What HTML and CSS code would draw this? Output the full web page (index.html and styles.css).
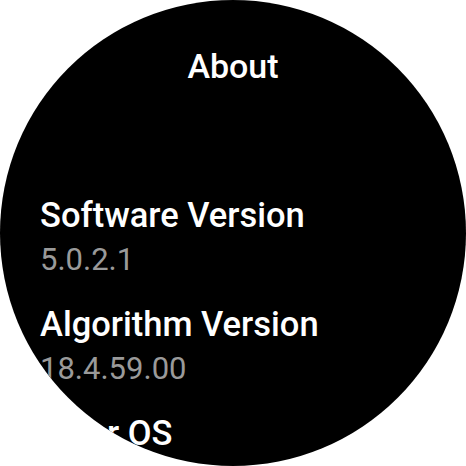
FILE: index.html
```html
<!DOCTYPE html>
<html>
<head>
<meta charset="utf-8">
<link rel="stylesheet" href="styles.css">
</head>
<body>
<div class="watch">
  <div class="header">About</div>
  <div class="list">
    <div class="item">
      <div class="title">Software Version</div>
      <div class="value">5.0.2.1</div>
    </div>
    <div class="item">
      <div class="title">Algorithm Version</div>
      <div class="value">18.4.59.00</div>
    </div>
    <div class="item">
      <div class="title">Wear OS</div>
      <div class="value">H MR2</div>
    </div>
  </div>
</div>
</body>
</html>
```
FILE: styles.css
```css
html, body {
  margin: 0;
  padding: 0;
  background: #ffffff;
}
.watch {
  width: 466px;
  height: 466px;
  border-radius: 50%;
  overflow: hidden;
  background: #000000;
  font-family: Roboto, "Noto Sans", sans-serif;
  display: flex;
  flex-direction: column;
  padding-top: 44px;
  box-sizing: border-box;
}
.header {
  color: #ffffff;
  font-size: 34px;
  font-weight: 500;
  line-height: 44px;
  text-align: center;
  margin-bottom: 105px;
}
.list {
  display: flex;
  flex-direction: column;
  gap: 20px;
  padding-left: 40px;
}
.item {
  display: flex;
  flex-direction: column;
  gap: 1px;
}
.title {
  color: #ffffff;
  font-size: 34.5px;
  font-weight: 500;
  line-height: 44px;
  white-space: nowrap;
}
.value {
  color: #9a9a9a;
  font-size: 31px;
  line-height: 44px;
  white-space: nowrap;
}
```
